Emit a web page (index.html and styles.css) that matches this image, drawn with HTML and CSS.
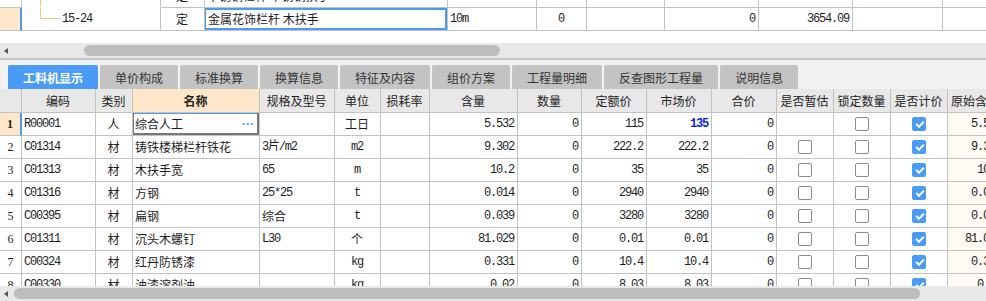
FILE: index.html
```html
<!DOCTYPE html>
<html>
<head>
  <meta charset="utf-8">
  <title>工料机显示</title>
  <link rel="stylesheet" href="styles.css">
</head>
<body>
  <!-- upper grid: quota items -->
  <div class="top-pane">
    <div class="top-rows">
      <div class="trow">
        <div class="c rn"></div>
        <div class="c code open"><span class="tree tree-mid"></span></div>
        <div class="c ctr">定</div>
        <div class="c">不锈钢栏杆 不锈钢扶手</div>
        <div class="c"></div>
        <div class="c"></div>
        <div class="c"></div>
        <div class="c"></div>
        <div class="c"></div>
        <div class="c"></div>
        <div class="c"></div>
      </div>
      <div class="trow">
        <div class="c rn cur"></div>
        <div class="c code"><span class="tree tree-end"></span><span class="m">15-24</span></div>
        <div class="c ctr">定</div>
        <div class="c sel-blue">金属花饰栏杆 木扶手</div>
        <div class="c m">10m</div>
        <div class="c ctr m">0</div>
        <div class="c"></div>
        <div class="c r m">0</div>
        <div class="c r m">3654.09</div>
        <div class="c"></div>
        <div class="c"></div>
      </div>
    </div>
  </div>
  <div class="hbar top-bar"><span class="arr"></span><span class="thumb"></span></div>

  <!-- tabs -->
  <div class="tabs">
    <div class="tab active">工料机显示</div>
    <div class="tab">单价构成</div>
    <div class="tab">标准换算</div>
    <div class="tab">换算信息</div>
    <div class="tab">特征及内容</div>
    <div class="tab">组价方案</div>
    <div class="tab">工程量明细</div>
    <div class="tab">反查图形工程量</div>
    <div class="tab">说明信息</div>
  </div>

  <!-- lower grid: labour / material / machine -->
  <div class="grid">
    <div class="row head">
      <div class="c"></div>
      <div class="c">编码</div>
      <div class="c">类别</div>
      <div class="c name-head">名称</div>
      <div class="c">规格及型号</div>
      <div class="c">单位</div>
      <div class="c">损耗率</div>
      <div class="c">含量</div>
      <div class="c">数量</div>
      <div class="c">定额价</div>
      <div class="c">市场价</div>
      <div class="c">合价</div>
      <div class="c">是否暂估</div>
      <div class="c">锁定数量</div>
      <div class="c">是否计价</div>
      <div class="c">原始含量</div>
    </div>
    <div class="row">
      <div class="c rn cur">1</div>
      <div class="c m">R00001</div>
      <div class="c ctr">人</div>
      <div class="c sel-cell">综合人工<span class="more">···</span></div>
      <div class="c m"></div>
      <div class="c ctr">工日</div>
      <div class="c"></div>
      <div class="c r m">5.532</div>
      <div class="c r m">0</div>
      <div class="c r m">115</div>
      <div class="c r m price">135</div>
      <div class="c r m">0</div>
      <div class="c ctr"></div>
      <div class="c ctr"><span class="cb"></span></div>
      <div class="c ctr"><span class="cb on"></span></div>
      <div class="c r m orig">5.532</div>
    </div>
    <div class="row">
      <div class="c rn">2</div>
      <div class="c m">C01314</div>
      <div class="c ctr">材</div>
      <div class="c">铸铁楼梯栏杆铁花</div>
      <div class="c m">3片/m2</div>
      <div class="c ctr m">m2</div>
      <div class="c"></div>
      <div class="c r m">9.302</div>
      <div class="c r m">0</div>
      <div class="c r m">222.2</div>
      <div class="c r m">222.2</div>
      <div class="c r m">0</div>
      <div class="c ctr"><span class="cb"></span></div>
      <div class="c ctr"><span class="cb"></span></div>
      <div class="c ctr"><span class="cb on"></span></div>
      <div class="c r m orig">9.302</div>
    </div>
    <div class="row">
      <div class="c rn">3</div>
      <div class="c m">C01313</div>
      <div class="c ctr">材</div>
      <div class="c">木扶手宽</div>
      <div class="c m">65</div>
      <div class="c ctr m">m</div>
      <div class="c"></div>
      <div class="c r m">10.2</div>
      <div class="c r m">0</div>
      <div class="c r m">35</div>
      <div class="c r m">35</div>
      <div class="c r m">0</div>
      <div class="c ctr"><span class="cb"></span></div>
      <div class="c ctr"><span class="cb"></span></div>
      <div class="c ctr"><span class="cb on"></span></div>
      <div class="c r m orig">10.2</div>
    </div>
    <div class="row">
      <div class="c rn">4</div>
      <div class="c m">C01316</div>
      <div class="c ctr">材</div>
      <div class="c">方钢</div>
      <div class="c m">25*25</div>
      <div class="c ctr m">t</div>
      <div class="c"></div>
      <div class="c r m">0.014</div>
      <div class="c r m">0</div>
      <div class="c r m">2940</div>
      <div class="c r m">2940</div>
      <div class="c r m">0</div>
      <div class="c ctr"><span class="cb"></span></div>
      <div class="c ctr"><span class="cb"></span></div>
      <div class="c ctr"><span class="cb on"></span></div>
      <div class="c r m orig">0.014</div>
    </div>
    <div class="row">
      <div class="c rn">5</div>
      <div class="c m">C00395</div>
      <div class="c ctr">材</div>
      <div class="c">扁钢</div>
      <div class="c">综合</div>
      <div class="c ctr m">t</div>
      <div class="c"></div>
      <div class="c r m">0.039</div>
      <div class="c r m">0</div>
      <div class="c r m">3280</div>
      <div class="c r m">3280</div>
      <div class="c r m">0</div>
      <div class="c ctr"><span class="cb"></span></div>
      <div class="c ctr"><span class="cb"></span></div>
      <div class="c ctr"><span class="cb on"></span></div>
      <div class="c r m orig">0.039</div>
    </div>
    <div class="row">
      <div class="c rn">6</div>
      <div class="c m">C01311</div>
      <div class="c ctr">材</div>
      <div class="c">沉头木螺钉</div>
      <div class="c m">L30</div>
      <div class="c ctr">个</div>
      <div class="c"></div>
      <div class="c r m">81.029</div>
      <div class="c r m">0</div>
      <div class="c r m">0.01</div>
      <div class="c r m">0.01</div>
      <div class="c r m">0</div>
      <div class="c ctr"><span class="cb"></span></div>
      <div class="c ctr"><span class="cb"></span></div>
      <div class="c ctr"><span class="cb on"></span></div>
      <div class="c r m orig">81.029</div>
    </div>
    <div class="row">
      <div class="c rn">7</div>
      <div class="c m">C00324</div>
      <div class="c ctr">材</div>
      <div class="c">红丹防锈漆</div>
      <div class="c m"></div>
      <div class="c ctr m">kg</div>
      <div class="c"></div>
      <div class="c r m">0.331</div>
      <div class="c r m">0</div>
      <div class="c r m">10.4</div>
      <div class="c r m">10.4</div>
      <div class="c r m">0</div>
      <div class="c ctr"><span class="cb"></span></div>
      <div class="c ctr"><span class="cb"></span></div>
      <div class="c ctr"><span class="cb on"></span></div>
      <div class="c r m orig">0.331</div>
    </div>
    <div class="row">
      <div class="c rn">8</div>
      <div class="c m">C00330</div>
      <div class="c ctr">材</div>
      <div class="c">油漆溶剂油</div>
      <div class="c m"></div>
      <div class="c ctr m">kg</div>
      <div class="c"></div>
      <div class="c r m">0.02</div>
      <div class="c r m">0</div>
      <div class="c r m">8.03</div>
      <div class="c r m">8.03</div>
      <div class="c r m">0</div>
      <div class="c ctr"><span class="cb"></span></div>
      <div class="c ctr"><span class="cb"></span></div>
      <div class="c ctr"><span class="cb on"></span></div>
      <div class="c r m orig">0.02</div>
    </div>
  </div>
  <div class="hbar bottom-bar"><span class="arr"></span><span class="thumb"></span></div>
</body>
</html>
```

FILE: styles.css
```css
body {
  margin: 0;
  width: 986px;
  height: 301px;
  overflow: hidden;
  background: #f2f2f2;
  font-family: "Noto Sans CJK SC", sans-serif;
  font-size: 12px;
  color: #1e1e1e;
}

/* shared cell */
.c {
  box-sizing: border-box;
  display: flex;
  align-items: center;
  padding: 0 3px 0 2px;
  border-right: 1px solid #c2c2c2;
  border-bottom: 1px solid #c2c2c2;
  white-space: nowrap;
  overflow: hidden;
  line-height: 1;
}
.c.ctr { justify-content: center; }
.c.r { justify-content: flex-end; }
.m {
  font-family: "Liberation Mono", "Noto Sans CJK SC", monospace;
  letter-spacing: -1.2px;
}
.rn {
  justify-content: center;
  padding: 0;
  font-family: "Liberation Serif", serif;
}
.rn.cur {
  background: #fee6c8;
  border-right: 2px solid #4a9bf5;
  font-weight: bold;
}

/* top grid */
.top-pane {
  height: 43px;
  overflow: hidden;
  background: #fff;
}
.top-rows { margin-top: -15px; }
.trow {
  display: grid;
  grid-template-columns: 22px 139px 44px 243px 89px 50px 78px 94px 94px 90px 60px;
  height: 23px;
}
.code { padding-left: 0; }
.code.open { border-bottom-color: #fff; }
.tree {
  box-sizing: border-box;
  display: inline-block;
  margin-left: 18px;
  width: 20px;
  border-left: 1px solid #fbc47b;
}
.tree-mid { align-self: stretch; }
.tree-end {
  align-self: flex-start;
  height: 11px;
  border-bottom: 1px solid #fbc47b;
  margin-right: 2px;
}
.sel-blue { position: relative; padding-left: 3px; }
.sel-blue::after {
  content: '';
  position: absolute;
  left: -1px;
  top: 0;
  right: 0;
  bottom: 0;
  border: 2px solid #4a9bf5;
}

/* scroll bars */
.hbar {
  display: flex;
  align-items: center;
  height: 15px;
  background: #e8e8e8;
}
.top-bar { border-bottom: 2px solid #c4c4c4; }
.arr {
  width: 0;
  height: 0;
  margin-left: 4px;
  border-top: 3px solid transparent;
  border-bottom: 3px solid transparent;
  border-right: 4px solid #555;
}
.thumb {
  height: 11px;
  border-radius: 6px;
  background: #bdbdbd;
}
.top-bar .thumb { margin-left: 76px; width: 416px; }
.bottom-bar .thumb { margin-left: 6px; width: 906px; }

/* tabs */
.tabs {
  box-sizing: border-box;
  display: flex;
  gap: 2px;
  height: 29px;
  padding: 5px 0 0 8px;
}
.tab {
  height: 24px;
  padding: 0 15px;
  display: flex;
  align-items: center;
  background: #c3c3c3;
  border-radius: 2px 2px 0 0;
  color: #333;
}
.tab.active {
  background: #4a9bf5;
  color: #fff;
  font-weight: bold;
}

/* lower grid */
.grid {
  height: 197px;
  overflow: hidden;
  background: #fff;
}
.row {
  display: grid;
  grid-template-columns: 22px 74px 37px 127px 75px 46px 49px 88px 64px 65px 65px 65px 57px 57px 57px 57px;
  height: 23px;
}
.row.head { height: 24px; }
.head .c {
  justify-content: center;
  background: #e8e8e8;
  color: #222;
}
.head .c.name-head {
  background: #fee6c8;
  font-weight: bold;
}
.sel-cell {
  position: relative;
  justify-content: space-between;
}
.sel-cell::after {
  content: '';
  position: absolute;
  left: -1px;
  top: -1px;
  right: 0;
  bottom: 0;
  border: 2px solid #777;
  border-top-color: #4a9bf5;
}
.more {
  font-family: "Liberation Sans", sans-serif;
  color: #4a9bf5;
  font-weight: bold;
  letter-spacing: 0;
  margin-right: 2px;
}
.price {
  color: #0a1ef0;
  font-weight: bold;
}
.orig {
  background: #fffaf4;
  overflow: visible;
  justify-content: flex-end;
}
.head .c:last-child { justify-content: flex-start; padding-left: 3px; overflow: visible; }

.cb {
  box-sizing: border-box;
  position: relative;
  display: inline-block;
  width: 14px;
  height: 14px;
  border: 1px solid #8c8c8c;
  border-radius: 2px;
  background: #fff;
}
.cb.on {
  border-color: #4a9bf5;
  background: #4a9bf5;
}
.cb.on::after {
  content: '';
  position: absolute;
  left: 3px;
  top: 3px;
  width: 6px;
  height: 3px;
  border-left: 2px solid #fff;
  border-bottom: 2px solid #fff;
  transform: rotate(-45deg);
}
```
